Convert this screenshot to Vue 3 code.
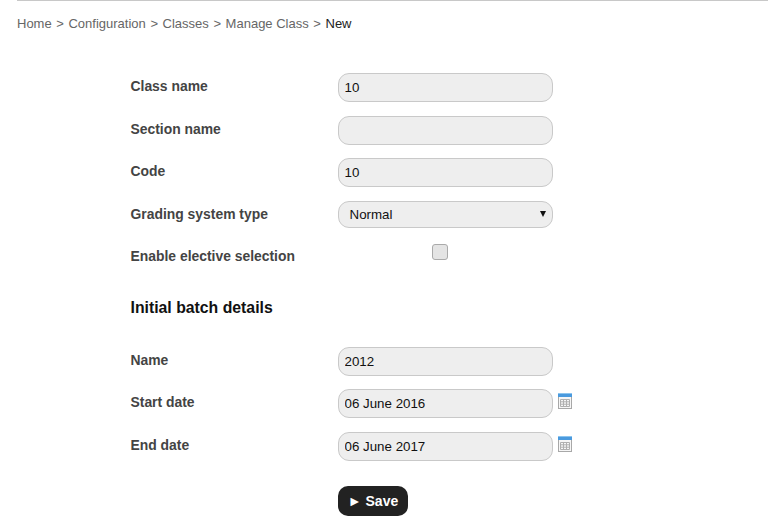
<template>
  <div class="page">
    <div class="breadcrumb">
      <template v-for="c in crumbs" :key="c">
        <a class="crumb">{{ c }}</a><span class="sep">&gt;</span>
      </template>
      <span class="current">New</span>
    </div>

    <form class="form" @submit.prevent>
      <div class="row">
        <label>Class name</label>
        <input class="field" type="text" v-model="className" />
      </div>
      <div class="row">
        <label>Section name</label>
        <input class="field" type="text" v-model="sectionName" />
      </div>
      <div class="row">
        <label>Code</label>
        <input class="field" type="text" v-model="code" />
      </div>
      <div class="row">
        <label>Grading system type</label>
        <div class="field select">
          <span>Normal</span>
          <span class="arrow"></span>
        </div>
      </div>
      <div class="row check-row">
        <label>Enable elective selection</label>
        <div class="check-wrap"><span class="check"></span></div>
      </div>

      <h3 class="section-title">Initial batch details</h3>

      <div class="row">
        <label>Name</label>
        <input class="field" type="text" v-model="batchName" />
      </div>
      <div class="row">
        <label>Start date</label>
        <input class="field" type="text" v-model="startDate" />
        <svg class="cal" width="14" height="16" viewBox="0 0 14 16">
          <rect x="0.5" y="3.5" width="13" height="12" fill="#f6f6f6" stroke="#a8a8a8" />
          <rect x="0" y="0" width="14" height="1" fill="#8cc4ee" />
          <rect x="0" y="1" width="14" height="3" fill="#4a9ade" />
          <path d="M2.5 6.5h9v7h-9zM2.5 8.8h9M2.5 11.2h9M5.5 6.5v7M8.5 6.5v7" stroke="#b0b0b0" stroke-width="1" fill="none" />
        </svg>
      </div>
      <div class="row">
        <label>End date</label>
        <input class="field" type="text" v-model="endDate" />
        <svg class="cal" width="14" height="16" viewBox="0 0 14 16">
          <rect x="0.5" y="3.5" width="13" height="12" fill="#f6f6f6" stroke="#a8a8a8" />
          <rect x="0" y="0" width="14" height="1" fill="#8cc4ee" />
          <rect x="0" y="1" width="14" height="3" fill="#4a9ade" />
          <path d="M2.5 6.5h9v7h-9zM2.5 8.8h9M2.5 11.2h9M5.5 6.5v7M8.5 6.5v7" stroke="#b0b0b0" stroke-width="1" fill="none" />
        </svg>
      </div>

      <div class="actions">
        <button class="save" type="submit">► Save</button>
      </div>
    </form>
  </div>
</template>

<script setup>
import { ref } from 'vue';

const crumbs = ['Home', 'Configuration', 'Classes', 'Manage Class'];
const className = ref('10');
const sectionName = ref('');
const code = ref('10');
const batchName = ref('2012');
const startDate = ref('06 June 2016');
const endDate = ref('06 June 2017');
</script>

<style>
html, body {
  margin: 0;
  background: #fff;
  overflow: hidden;
}
</style>

<style scoped>
.page {
  width: 768px;
  height: 529px;
  overflow: hidden;
  box-sizing: border-box;
  padding-left: 17px;
  font-family: "Liberation Sans", Arial, sans-serif;
  font-size: 13px;
}
.breadcrumb {
  border-top: 1px solid #c8c8c8;
  padding-top: 15px;
  height: 57px;
  line-height: 16px;
  color: #555;
}
.crumb { color: #666; }
.sep { margin: 0 4.6px; color: #666; }
.current { color: #222; }

.form {
  padding-left: 113.5px;
}
.row {
  display: flex;
  height: 42.6px;
}
.row label {
  width: 207.5px;
  font-weight: bold;
  font-size: 13.9px;
  line-height: 16px;
  padding-top: 5px;
  color: #444;
}
.field {
  box-sizing: border-box;
  width: 215px;
  height: 29px;
  padding: 0 5px 0 5.5px;
  border: 1px solid #c9c9c9;
  border-radius: 11px;
  background: #eee;
  font-family: "Liberation Sans", Arial, sans-serif;
  font-size: 13.33px;
  color: #111;
  outline: none;
}
.select {
  height: 27px;
  display: flex;
  align-items: center;
  justify-content: space-between;
  padding: 0 6px 0 10.5px;
}
.arrow {
  width: 0;
  height: 0;
  border-left: 3px solid transparent;
  border-right: 3px solid transparent;
  border-top: 6px solid #111;
}
.check-wrap {
  width: 203px;
  display: flex;
  justify-content: center;
}
.check {
  box-sizing: border-box;
  width: 16px;
  height: 16px;
  margin-top: 1px;
  border: 1px solid #aaa;
  border-radius: 3px;
  background: #e4e4e4;
}
.check-row { height: 46px; }
.section-title {
  margin: 0;
  height: 57.2px;
  padding-top: 9px;
  box-sizing: border-box;
  font-size: 15.8px;
  line-height: 19px;
  font-weight: bold;
  color: #111;
}
.cal {
  margin: 4px 0 0 5px;
}
.actions {
  padding: 12px 0 0 207.5px;
}
.save {
  width: 70px;
  height: 30px;
  border: none;
  border-radius: 10px;
  background: #222;
  color: #fff;
  font-family: "Liberation Sans", Arial, sans-serif;
  font-size: 14px;
  font-weight: bold;
  padding: 0;
}
</style>
